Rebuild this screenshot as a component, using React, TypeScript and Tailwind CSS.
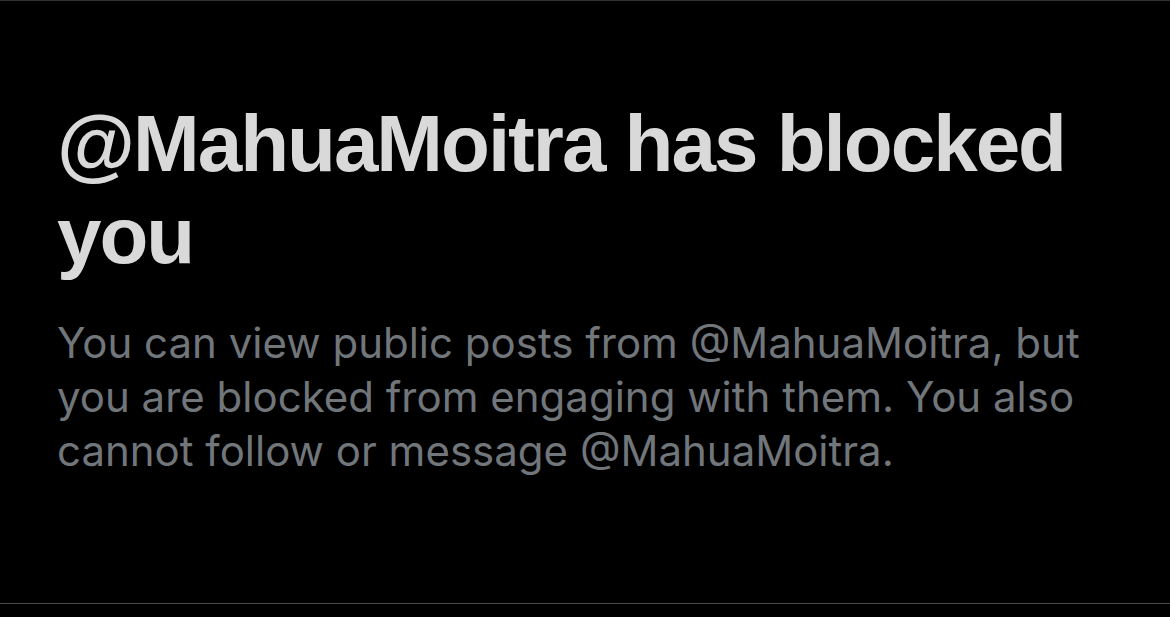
import React from "react";

const handle = "@MahuaMoitra";

const BlockedNotice = () => {
    return (
        <section className="w-full h-[617px] bg-black flex flex-col">
            <div className="h-px bg-[#333333]" />
            <div className="flex-1 flex flex-col px-[57px] pt-[97px]">
                <h1 className="font-['Liberation_Sans',Arial,sans-serif] text-[80px] leading-[92px] font-bold text-[#d9d9d9] tracking-[-2px] w-[1060px]">
                    {handle} has blocked you
                </h1>
                <p className="mt-[34px] font-['Inter',sans-serif] text-[42px] leading-[54px] text-[#71767b] w-[1060px]">
                    You can view public posts from {handle}, but you are
                    blocked from engaging with them. You also cannot follow
                    or message {handle}.
                </p>
            </div>
            <div className="h-px bg-[#4a4a4a] mb-[13px]" />
        </section>
    );
};

export default function App() {
    return <BlockedNotice />;
}
